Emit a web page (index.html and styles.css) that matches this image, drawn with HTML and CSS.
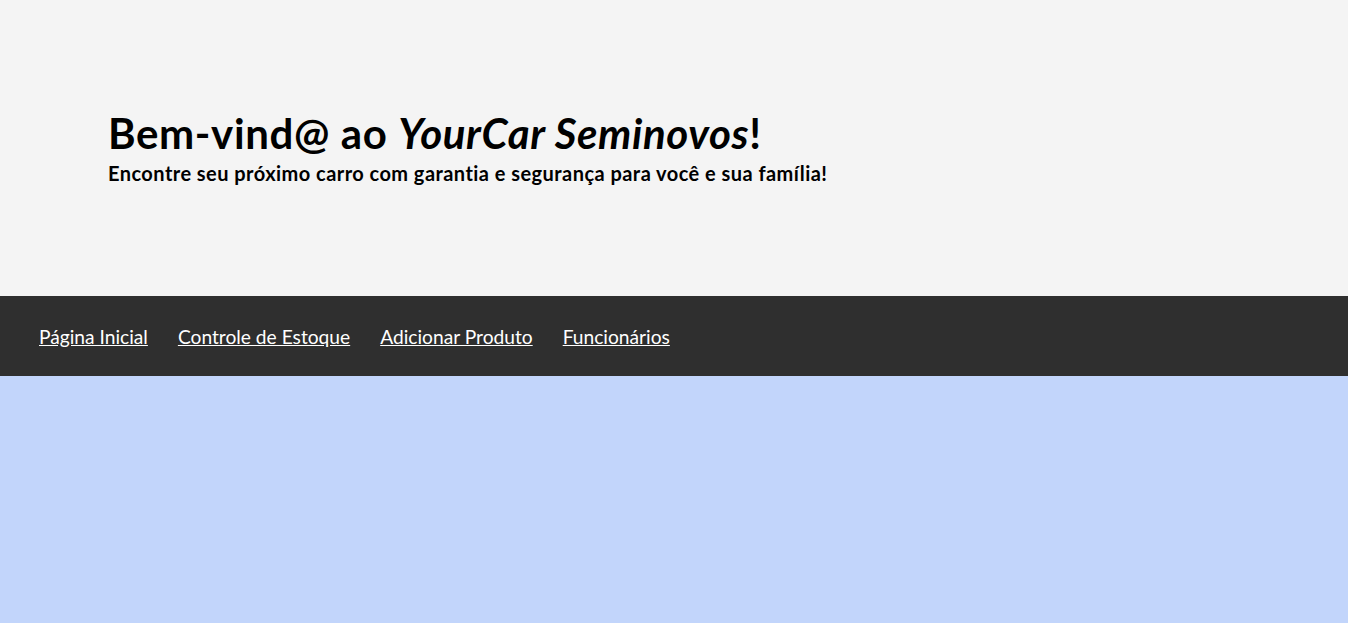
FILE: index.html
```html
<!DOCTYPE html>
<html lang="pt-BR">
<head>
<meta charset="utf-8">
<title>YourCar Seminovos</title>
<link rel="stylesheet" href="styles.css">
</head>
<body>
<div class="page">
  <header class="hero">
    <h1 class="hero-title">Bem-vind@ ao <em>YourCar Seminovos</em>!</h1>
    <p class="hero-sub">Encontre seu próximo carro com garantia e segurança para você e sua família!</p>
  </header>
  <nav class="menu">
    <a href="#">Página Inicial</a>
    <a href="#">Controle de Estoque</a>
    <a href="#">Adicionar Produto</a>
    <a href="#">Funcionários</a>
  </nav>
  <main class="content"></main>
</div>
</body>
</html>
```
FILE: styles.css
```css
html, body {
  margin: 0;
  padding: 0;
  height: 100%;
  background: #ffffff;
}
body {
  font-family: "Lato", "Open Sans", sans-serif;
}
.page {
  min-height: 100%;
  margin-right: 1px;
  display: flex;
  flex-direction: column;
}
.hero {
  background: #f4f4f4;
  height: 296px;
  box-sizing: border-box;
  padding: 109px 0 0 108px;
}
.hero-title {
  margin: 0;
  font-size: 42px;
  line-height: 48px;
  letter-spacing: 0.62px;
  font-weight: 700;
  color: #000;
}
.hero-title em {
  font-style: italic;
}
.hero-sub {
  margin: 4px 0 0;
  font-size: 20px;
  line-height: 24px;
  letter-spacing: 0.45px;
  font-weight: 700;
  color: #000;
}
.menu {
  background: #2f2f2f;
  height: 80px;
  box-sizing: border-box;
  padding: 0 39px;
  display: flex;
  align-items: center;
  gap: 30px;
}
.menu a {
  color: #ffffff;
  font-size: 19.2px;
  text-decoration: underline;
}
.content {
  flex: 1;
  background: #c2d5fb;
}
```
